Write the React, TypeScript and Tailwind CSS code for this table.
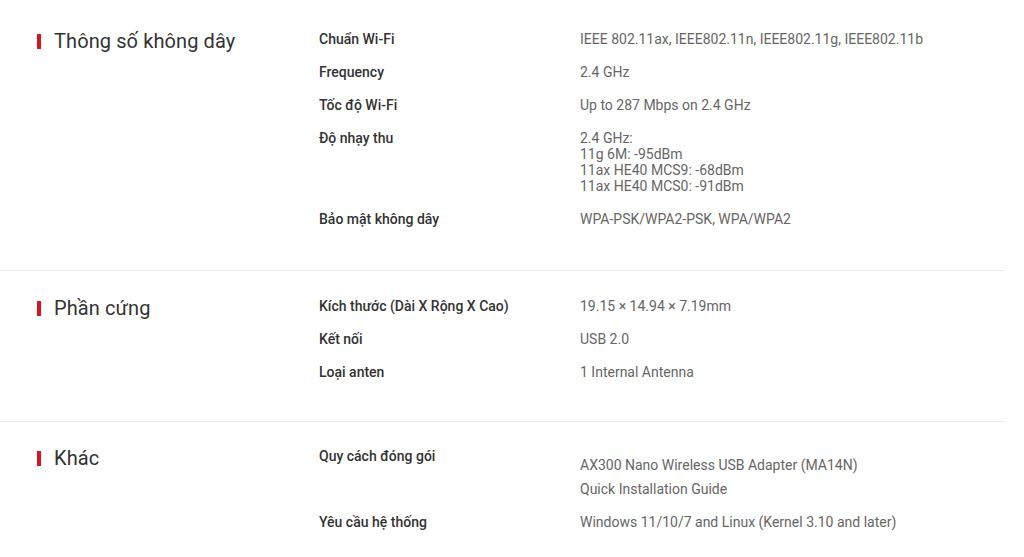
import React from "react";

type Row = { label: string; values: string[]; list?: boolean };
type Section = { title: string; rows: Row[] };

const sections: Section[] = [
  {
    title: "Thông số không dây",
    rows: [
      { label: "Chuẩn Wi-Fi", values: ["IEEE 802.11ax, IEEE802.11n, IEEE802.11g, IEEE802.11b"] },
      { label: "Frequency", values: ["2.4 GHz"] },
      { label: "Tốc độ Wi-Fi", values: ["Up to 287 Mbps on 2.4 GHz"] },
      {
        label: "Độ nhạy thu",
        values: ["2.4 GHz:", "11g 6M: -95dBm", "11ax HE40 MCS9: -68dBm", "11ax HE40 MCS0: -91dBm"],
      },
      { label: "Bảo mật không dây", values: ["WPA-PSK/WPA2-PSK, WPA/WPA2"] },
    ],
  },
  {
    title: "Phần cứng",
    rows: [
      { label: "Kích thước (Dài X Rộng X Cao)", values: ["19.15 × 14.94 × 7.19mm"] },
      { label: "Kết nối", values: ["USB 2.0"] },
      { label: "Loại anten", values: ["1 Internal Antenna"] },
    ],
  },
  {
    title: "Khác",
    rows: [
      {
        label: "Quy cách đóng gói",
        values: ["AX300 Nano Wireless USB Adapter (MA14N)", "Quick Installation Guide"],
        list: true,
      },
      { label: "Yêu cầu hệ thống", values: ["Windows 11/10/7 and Linux (Kernel 3.10 and later)"] },
    ],
  },
];

const pads = ["pt-[31px] pb-[43px]", "pt-[27px] pb-[41px]", "pt-[26px] pb-[42px]"];

export default function App() {
  return (
    <div
      className="w-[1024px] h-[557px] overflow-hidden bg-white"
      style={{ fontFamily: "Roboto, 'Noto Sans', Arial, sans-serif" }}
    >
      {sections.map((s, i) => (
        <div
          key={s.title}
          className={
            "w-[1005px] flex " +
            pads[i] +
            (i < sections.length - 1 ? " border-b border-[#ececec]" : "")
          }
        >
          <div className="w-[319px] shrink-0 flex items-start pl-[37px]">
            <div className="flex items-center h-[24px] -mt-[2px] gap-[13px]">
              <span className="w-[4px] h-[15px] bg-[#d9141e]" />
              <span className="text-[20px] leading-[24px] text-[#333333] tracking-[0.1px]">{s.title}</span>
            </div>
          </div>
          <div className="flex flex-col gap-[17px]">
            {s.rows.map((r) => (
              <div key={r.label} className="flex">
                <div className="w-[261px] shrink-0 text-[14px] leading-[16px] font-medium text-[#333333]">
                  {r.label}
                </div>
                <div
                  className={
                    "flex flex-col text-[14px] leading-[16px] text-[#666666] " +
                    (r.list ? "pt-[9px] gap-[8px]" : "")
                  }
                >
                  {r.values.map((v) => (
                    <div key={v}>{v}</div>
                  ))}
                </div>
              </div>
            ))}
          </div>
        </div>
      ))}
    </div>
  );
}
